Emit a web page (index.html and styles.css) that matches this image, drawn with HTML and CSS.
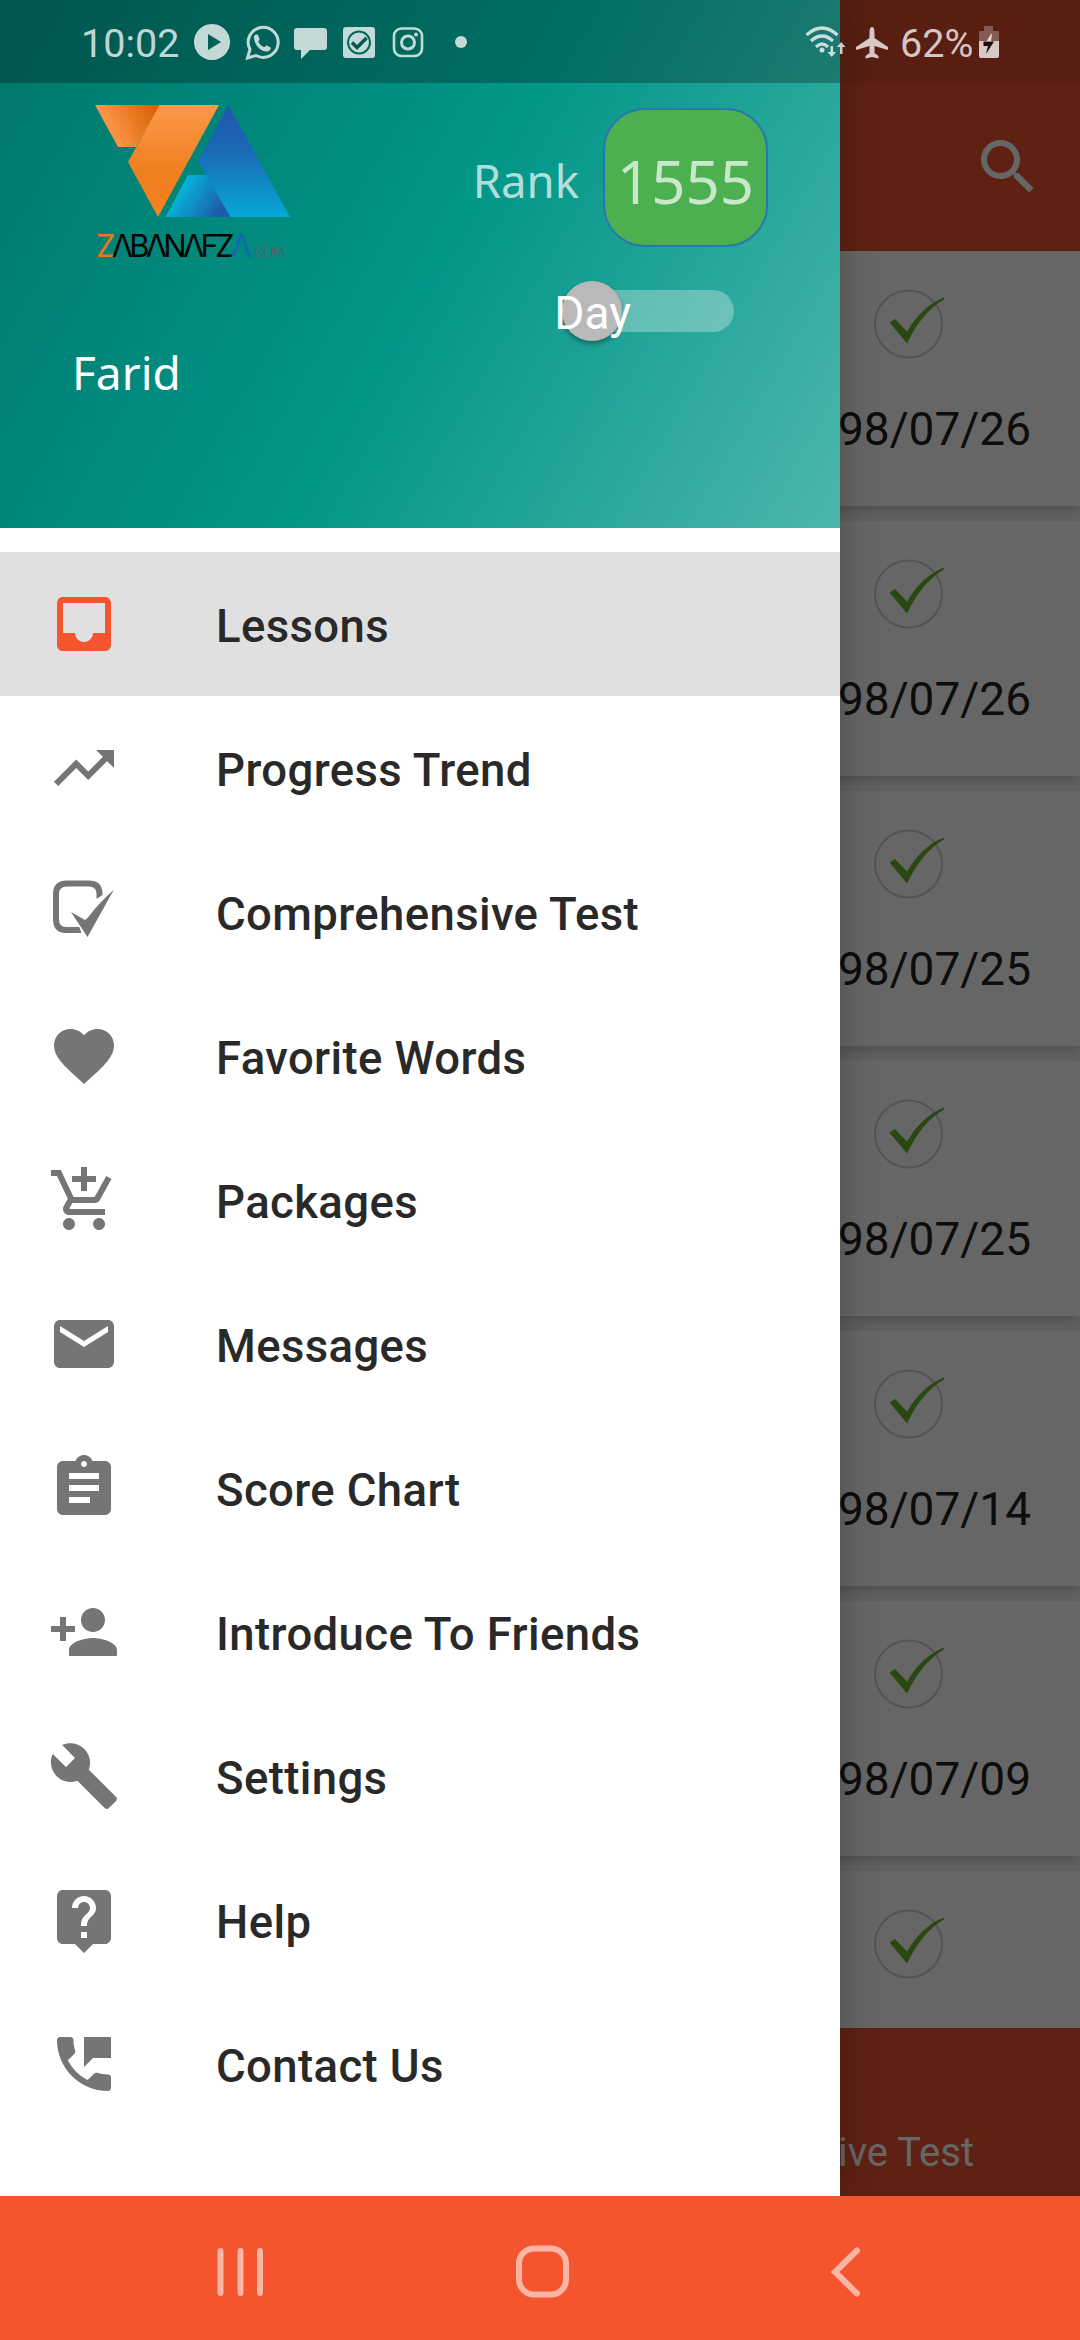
FILE: index.html
```html
<!DOCTYPE html>
<html lang="en">
<head>
<meta charset="utf-8">
<title>Zabanafza</title>
<link rel="stylesheet" href="styles.css">
</head>
<body>
<div class="screen">
  <div class="stage">
    <div class="app">
      <header class="toolbar">
        <svg class="search" viewBox="0 0 24 24"><path d="M15.5 14h-.79l-.28-.27A6.471 6.471 0 0 0 16 9.5 6.5 6.5 0 1 0 9.500 16c1.610 0 3.090-.59 4.230-1.570l.27.28v.79l5 4.990L20.490 19l-4.990-5zm-6 0C7.010 14 5 11.990 5 9.500S7.010 5 9.500 5 14 7.010 14 9.500 11.990 14 9.500 14z"/></svg>
      </header>
      <main class="lessons">
        <article class="lesson"><svg class="done" viewBox="0 0 72 72"><use href="#done"/></svg><time class="date">1398/07/26</time></article>
        <article class="lesson"><svg class="done" viewBox="0 0 72 72"><use href="#done"/></svg><time class="date">1398/07/26</time></article>
        <article class="lesson"><svg class="done" viewBox="0 0 72 72"><use href="#done"/></svg><time class="date">1398/07/25</time></article>
        <article class="lesson"><svg class="done" viewBox="0 0 72 72"><use href="#done"/></svg><time class="date">1398/07/25</time></article>
        <article class="lesson"><svg class="done" viewBox="0 0 72 72"><use href="#done"/></svg><time class="date">1398/07/14</time></article>
        <article class="lesson"><svg class="done" viewBox="0 0 72 72"><use href="#done"/></svg><time class="date">1398/07/09</time></article>
        <article class="lesson"><svg class="done" viewBox="0 0 72 72"><use href="#done"/></svg></article>
      </main>
      <footer class="bottom-tab">Comprehensive Test</footer>
    </div>
    <div class="scrim"></div>
    <aside class="drawer">
      <div class="profile">
        <div class="brand">
          <svg class="logo" viewBox="0 0 196 114">
            <defs>
              <linearGradient id="o1" x1="0" y1="0.6" x2="1" y2="0.3"><stop offset="0.25" stop-color="#fb9344"/><stop offset="0.95" stop-color="#d96406"/></linearGradient>
              <linearGradient id="o2" x1="0" y1="0" x2="0" y2="1"><stop offset="0" stop-color="#fd984a"/><stop offset="0.6" stop-color="#ef7f20"/><stop offset="1" stop-color="#f5811f"/></linearGradient>
              <linearGradient id="b1" x1="0" y1="0" x2="0" y2="1"><stop offset="0" stop-color="#1f57ad"/><stop offset="0.4" stop-color="#1a68b6"/><stop offset="1" stop-color="#05a9d6"/></linearGradient>
              <linearGradient id="b2" x1="0" y1="0.3" x2="1" y2="0.7"><stop offset="0.2" stop-color="#07b3d8"/><stop offset="0.9" stop-color="#1d5cab"/></linearGradient>
            </defs>
            <path fill="url(#o1)" d="M0 0H66L41 42H23Z"/>
            <path fill="url(#o2)" d="M64.500 0H124L63 112 33 57Z"/>
            <path fill="url(#b2)" d="M93 70H112L137 112H70.500Z"/>
            <path fill="url(#b1)" d="M133.500 0 195 112H135.500L103 56Z"/>
          </svg>
          <div class="wordmark"><span class="wz">Z</span>ΛBΛNΛFZ<span class="wa">Λ</span><span class="wc">.COM</span></div>
        </div>
        <div class="rank"><span class="rank-label">Rank</span><span class="rank-value">1555</span></div>
        <div class="switch"><span class="track"></span><span class="thumb"></span><span class="mode">Day</span></div>
        <div class="name">Farid</div>
      </div>
      <nav class="menu">
        <a class="item active"><svg class="icon" viewBox="0 0 24 24"><path d="M19 3H4.990c-1.110 0-1.980.89-1.980 2L3 19c0 1.100.88 2 1.990 2H19c1.100 0 2-.9 2-2V5c0-1.110-.9-2-2-2zm0 12h-4c0 1.660-1.350 3-3 3s-3-1.340-3-3H4.990V5H19v10z"/></svg><span>Lessons</span></a>
        <a class="item"><svg class="icon" viewBox="0 0 24 24"><path d="M16 6l2.290 2.290-4.880 4.880-4-4L2 16.590 3.410 18l6-6 4 4 6.300-6.290L22 12V6z"/></svg><span>Progress Trend</span></a>
        <a class="item"><svg class="icon" viewBox="0 0 72 72"><path fill="none" stroke="currentColor" stroke-width="6" d="M51.500 23v-6Q51 7.500 41 7.500H19Q8 7.500 8 18V43Q8 54 18 54H33"/><path fill="#fff" d="M45 25 56 18 60 26 40 62 34 58 30 48Z"/><path d="M23 36 37 44Q40 42 42 39 51 27 66 13.500L39.500 61Z"/></svg><span>Comprehensive Test</span></a>
        <a class="item"><svg class="icon" viewBox="0 0 24 24"><path d="M12 21.350l-1.450-1.320C5.400 15.360 2 12.280 2 8.500 2 5.420 4.420 3 7.500 3c1.740 0 3.410.81 4.500 2.090C13.090 3.810 14.760 3 16.500 3 19.580 3 22 5.420 22 8.500c0 3.780-3.400 6.860-8.550 11.540L12 21.350z"/></svg><span>Favorite Words</span></a>
        <a class="item"><svg class="icon" viewBox="0 0 24 24"><path d="M11 9h2V6h3V4h-3V1h-2v3H8v2h3v3zm-4 9c-1.100 0-1.990.9-1.990 2S5.900 22 7 22s2-.9 2-2-.9-2-2-2zm10 0c-1.100 0-1.990.9-1.990 2s.89 2 1.990 2 2-.9 2-2-.9-2-2-2zm-9.830-3.250l.03-.12.900-1.630h7.450c.75 0 1.410-.41 1.750-1.030l3.860-7.010L19.420 4h-.01l-1.100 2-2.760 5H8.530l-.13-.27L6.160 6l-.95-2-.94-2H1v2h2l3.600 7.590-1.350 2.450c-.16.28-.25.61-.25.960 0 1.100.9 2 2 2h12v-2H7.420c-.13 0-.25-.11-.25-.25z"/></svg><span>Packages</span></a>
        <a class="item"><svg class="icon" viewBox="0 0 24 24"><path d="M20 4H4c-1.100 0-1.990.9-1.990 2L2 18c0 1.100.9 2 2 2h16c1.100 0 2-.9 2-2V6c0-1.100-.9-2-2-2zm0 4l-8 5-8-5V6l8 5 8-5v2z"/></svg><span>Messages</span></a>
        <a class="item"><svg class="icon" viewBox="0 0 24 24"><path d="M19 3h-4.180C14.400 1.840 13.300 1 12 1c-1.300 0-2.400.84-2.820 2H5c-1.100 0-2 .9-2 2v14c0 1.100.9 2 2 2h14c1.100 0 2-.9 2-2V5c0-1.100-.9-2-2-2zm-7 0c.55 0 1 .45 1 1s-.45 1-1 1-1-.45-1-1 .45-1 1-1zm2 14H7v-2h7v2zm3-4H7v-2h10v2zm0-4H7V7h10v2z"/></svg><span>Score Chart</span></a>
        <a class="item"><svg class="icon" viewBox="0 0 24 24"><path d="M15 12c2.210 0 4-1.790 4-4s-1.790-4-4-4-4 1.790-4 4 1.790 4 4 4zm-9-2V7H4v3H1v2h3v3h2v-3h3v-2H6zm9 4c-2.670 0-8 1.340-8 4v2h16v-2c0-2.660-5.330-4-8-4z"/></svg><span>Introduce To Friends</span></a>
        <a class="item"><svg class="icon" viewBox="0 0 24 24"><path d="M22.700 19l-9.100-9.100c.9-2.300.4-5-1.500-6.900-2-2-5-2.400-7.400-1.300L9 6 6 9 1.600 4.700C.4 7.100.9 10.100 2.900 12.100c1.900 1.900 4.600 2.400 6.900 1.500l9.100 9.100c.4.400 1 .4 1.400 0l2.300-2.300c.5-.4.5-1.100.1-1.400z"/></svg><span>Settings</span></a>
        <a class="item"><svg class="icon" viewBox="0 0 24 24"><path d="M19 2H5c-1.110 0-2 .9-2 2v14c0 1.100.89 2 2 2h4l3 3 3-3h4c1.100 0 2-.9 2-2V4c0-1.100-.9-2-2-2zm-6 16h-2v-2h2v2zm2.070-7.750l-.9.920C13.450 11.900 13 12.500 13 14h-2v-.5c0-1.100.45-2.100 1.170-2.830l1.240-1.260c.37-.36.59-.86.59-1.410 0-1.100-.9-2-2-2s-2 .9-2 2H8c0-2.210 1.790-4 4-4s4 1.790 4 4c0 .88-.36 1.680-.93 2.250z"/></svg><span>Help</span></a>
        <a class="item"><svg class="icon" viewBox="0 0 24 24"><path d="M20 15.500c-1.250 0-2.450-.2-3.570-.57-.35-.11-.74-.03-1.020.24l-2.200 2.200c-2.830-1.440-5.150-3.750-6.590-6.580l2.200-2.210c.28-.27.360-.66.250-1.010C8.700 6.450 8.500 5.250 8.500 4c0-.55-.45-1-1-1H4c-.55 0-1 .45-1 1 0 9.390 7.610 17 17 17 .55 0 1-.45 1-1v-3.500c0-.55-.45-1-1-1zM12 3v10l3-3h6V3h-9z"/></svg><span>Contact Us</span></a>
      </nav>
    </aside>
    <div class="statusbar">
      <span class="clock">10:02</span>
      <svg class="notes" viewBox="0 0 280 42">
        <path fill-rule="evenodd" d="M18 3a18 18 0 1 0 .01 0ZM14 13 27 21 14 29Z"/>
        <path fill="none" stroke="currentColor" stroke-width="3" d="M53.500 37 56 28.500A15 15 0 1 1 62 34.500Z"/>
        <path d="M60 15.500c1-2.500 4-2.500 4.500-.5l1 3c.3 1-1.500 2-1 3 1.500 2.500 3 4 5.500 5 1 .3 2-2 3-1.500l3.500 2c1 1-.5 3.500-3 4-6 1-14-7-13.500-15Z"/>
        <path d="M103 7h27q3 0 3 3v16q0 3-3 3h-14l-9 9v-9h-4q-3 0-3-3V10q0-3 3-3Z"/>
        <path fill-rule="evenodd" d="M152 6h26q3 0 3 3v25q0 3-3 3h-26q-3 0-3-3V9q0-3 3-3ZM165 9.500a12 12 0 1 0 .01 0Z"/>
        <circle cx="165" cy="21.500" r="10"/>
        <path class="cut" d="m158 21.500 5 5 9.500-9.500"/>
        <g fill="none" stroke="currentColor"><rect x="200" y="7.500" width="28" height="27.500" rx="7.500" stroke-width="2.600"/><circle cx="214" cy="21.500" r="6.500" stroke-width="3"/></g><circle cx="222" cy="13.500" r="1.900"/>
        <circle cx="267" cy="21" r="6"/>
      </svg>
      <span class="gap"></span>
      <svg class="radio" viewBox="0 0 90 42">
        <g fill="none" stroke="currentColor" stroke-width="3.200"><path d="M1.500 14q15.500-14 31 0M6 20q11-10 22 0M11 26q6-6 12 0"/></g><circle cx="17" cy="29" r="2.500"/>
        <path d="M25.500 25h2.500v6h3l-4.200 5-4.300-5h3ZM35 33h2.500v-7h3l-4.300-5-4.200 5h3Z"/>
        <path d="M67 6c2 0 2.500 3 2.500 6v5L83 26v3l-13.500-4v7l4 3v2.500L67 36l-6.500 1.500V35l4-3v-7L51 29v-3l13.500-9v-5c0-3 .5-6 2.500-6Z"/>
      </svg>
      <span class="percent">62%</span>
      <svg class="battery" viewBox="0 0 20 42"><path opacity=".35" d="M5 5h9v5h6v10H0V10h5Z"/><path d="M0 20h20v15q0 2-2 2H2q-2 0-2-2Z"/><path d="M7 21 12 13H13L12 21Z"/><path fill="#1c0b07" d="M4.500 20.500H15L7 33 9 25H4.500Z"/></svg>
    </div>
  </div>
  <div class="navbar">
    <svg class="key" viewBox="0 0 60 60"><path d="M9.500 9V51M29.500 9V51M49 9V51"/></svg>
    <svg class="key" viewBox="0 0 60 60"><rect x="7" y="6.500" width="47" height="46" rx="15"/></svg>
    <svg class="key" viewBox="0 0 60 60"><path d="M43 8.500 21 30 43 51.500"/></svg>
  </div>
</div>
<svg class="defs" width="0" height="0"><defs><g id="done"><circle cx="35.500" cy="37" r="33.500" fill="none" stroke="#d0d0d0" stroke-width="2"/><path fill="#6cb52d" d="M16.500 35.500 22 32 34 44.500Q49 19 71 10.500V12.500Q49 25 34 56.500Z"/></g></defs></svg>
</body>
</html>
```
FILE: styles.css
```css
* { box-sizing: border-box; }
body { margin: 0; background: #fff; font-family: Roboto, "Noto Sans", sans-serif; }
svg { display: block; flex: none; fill: currentColor; }
.defs { position: absolute; }
.screen { width: 1080px; height: 2340px; display: flex; flex-direction: column; overflow: hidden; }
.stage { position: relative; flex: 1; overflow: hidden; }

.app { height: 2196px; display: flex; flex-direction: column; background: #f0f0f0; }
.toolbar { height: 251px; padding: 83px 36px 0 0; background: #ee5430; display: flex; align-items: center; justify-content: flex-end; color: #fff; }
.search { width: 72px; height: 72px; }
.lessons { flex: 1; min-height: 0; overflow: hidden; display: flex; flex-direction: column; gap: 15px; background: #f2f2f2; }
.lesson { height: 255px; flex: none; padding: 36px 49px 0 0; background: #fff; box-shadow: 0 6px 10px -2px rgba(0,0,0,.18); display: flex; flex-direction: column; align-items: flex-end; }
.done { width: 72px; height: 72px; margin-right: 86px; }
.date { margin-top: 42px; font-size: 46px; line-height: 56px; color: #222; }
.bottom-tab { height: 168px; padding: 97px 106px 0 0; background: #ee5430; color: #fff; font-size: 40px; line-height: 56px; text-align: right; }

.scrim { position: absolute; inset: 0; background: rgba(0,0,0,.6); }
.drawer { position: absolute; top: 0; left: 0; width: 840px; height: 2196px; background: #fff; box-shadow: 0 0 36px rgba(0,0,0,.25); }
.profile { height: 528px; padding: 105px 72px 0 72px; display: grid; grid-template-columns: 1fr auto; grid-template-rows: 143px 86px 80px; background: linear-gradient(120deg, #00766a, #009688 51%, #4db6ac); font-family: "Noto Sans", sans-serif; }
.brand { grid-row: 1 / 3; padding-left: 23px; }
.logo { width: 196px; height: 114px; }
.wordmark { margin-top: 11px; padding-left: 1px; font: 400 31px/31px Inter, sans-serif; letter-spacing: -3.8px; color: #050505; white-space: nowrap; }
.wz { color: #e8781c; }
.wa { color: #1467b0; }
.wc { margin-left: 3px; font-size: 14px; font-weight: 300; letter-spacing: -1.2px; color: #5c5f60; }
.rank { display: flex; align-items: flex-start; gap: 24px; color: rgba(255,255,255,.7); font-size: 45.5px; }
.rank-label { padding-top: 44px; line-height: 62px; }
.rank-value { margin-top: 3px; width: 165px; height: 139px; border: 2px solid #2878ae; border-radius: 42px; background: #4caf50; font-size: 60px; line-height: 143px; text-align: center; }
.switch { position: relative; }
.track { position: absolute; right: 34px; top: 42px; width: 150px; height: 42px; border-radius: 21px; background: rgba(255,255,255,.3); }
.thumb { position: absolute; right: 146px; top: 33px; width: 60px; height: 60px; border-radius: 50%; background: #b9b9b9; box-shadow: 0 3px 5px rgba(0,0,0,.35); }
.mode { position: absolute; right: 137px; top: 34px; font: 46px/62px Roboto, sans-serif; color: #fff; }
.name { grid-column: 1 / 3; color: #fff; font-size: 46px; line-height: 76px; }

.menu { padding-top: 24px; display: flex; flex-direction: column; }
.item { height: 144px; padding: 4px 48px 0; display: flex; align-items: center; gap: 96px; color: #292929; font-size: 45.5px; font-weight: 500; letter-spacing: .38px; white-space: nowrap; }
.icon { width: 72px; height: 72px; margin-top: -4px; color: #757575; }
.active { background: #e0e0e0; }
.active .icon { color: #f4552f; }

.statusbar { position: absolute; top: 0; left: 0; width: 1080px; height: 83px; padding: 0 81px; display: flex; align-items: center; background: linear-gradient(90deg, rgba(0,0,0,.27) 840px, rgba(0,0,0,.08) 840px); color: rgba(255,255,255,.76); font-size: 39.5px; }
.clock { width: 113px; line-height: 42px; padding-top: 4px; }
.notes { width: 280px; height: 42px; }
.gap { flex: 1; }
.radio { width: 90px; height: 42px; }
.percent { margin-left: 5px; width: 79px; padding-top: 4px; line-height: 42px; }
.battery { width: 20px; height: 42px; }
.cut { fill: none; stroke: #00584e; stroke-width: 3.5; }

.navbar { height: 144px; display: flex; align-items: center; justify-content: space-around; padding: 7px 85.5px 0 90.5px; background: #f4552f; color: #fbb5a4; }
.key { width: 60px; height: 60px; fill: none; stroke: currentColor; stroke-width: 6; stroke-linecap: round; }
```
